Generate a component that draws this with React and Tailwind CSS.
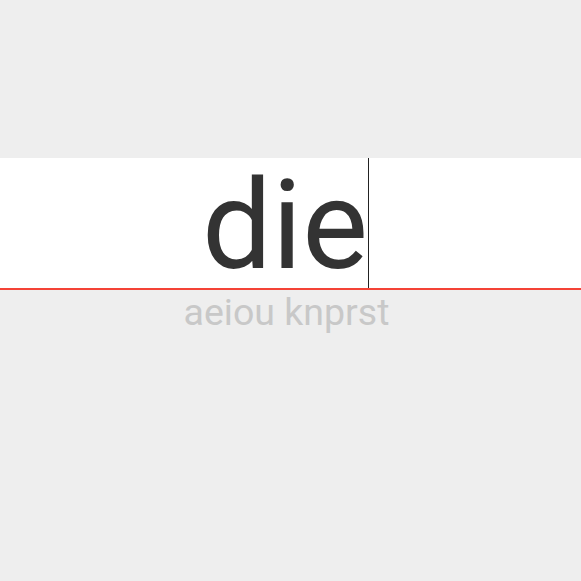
export default function App() {
  return (
    <div className="w-[581px] h-[581px] bg-[#eeeeee] flex flex-col" style={{ fontFamily: 'Roboto, sans-serif' }}>
      <div className="h-[158px]" />
      <div className="h-[132px] bg-white border-b-2 border-[#f44336] flex justify-center items-stretch">
        <div className="flex items-end mr-[10px]">
          <span className="text-[124px] leading-none text-[#333333]">die</span>
          <span className="w-px self-stretch bg-[#222222]" />
        </div>
      </div>
      <div className="flex justify-center">
        <span className="text-[37.5px] leading-none text-[#c8c8c8] mt-[4px] mr-[8px]">aeiou knprst</span>
      </div>
    </div>
  );
}
